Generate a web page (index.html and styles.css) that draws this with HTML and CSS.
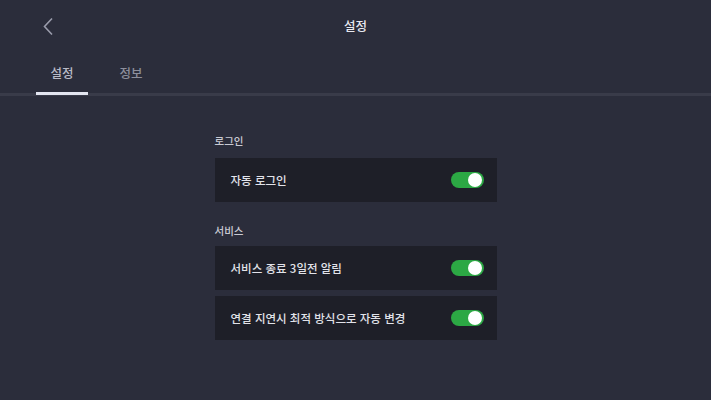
FILE: index.html
```html
<!DOCTYPE html>
<html lang="ko">
<head>
<meta charset="utf-8">
<title>설정</title>
<link rel="stylesheet" href="styles.css">
</head>
<body>
<div class="app">
  <header class="topbar">
    <button class="back" aria-label="뒤로">
      <svg width="12" height="19" viewBox="0 0 12 19"><path d="M10 1.5 L2.5 9.5 L10 17.5" fill="none" stroke="#9a9cab" stroke-width="1.6"/></svg>
    </button>
    <h1 class="title">설정</h1>
  </header>
  <nav class="tabs">
    <div class="tab active">설정</div>
    <div class="tab">정보</div>
  </nav>
  <main class="content">
    <section class="group">
      <div class="group-label">로그인</div>
      <div class="rows">
        <div class="row"><span class="row-text">자동 로그인</span><span class="toggle on"><span class="knob"></span></span></div>
      </div>
    </section>
    <section class="group">
      <div class="group-label">서비스</div>
      <div class="rows">
        <div class="row"><span class="row-text">서비스 종료 3일전 알림</span><span class="toggle on"><span class="knob"></span></span></div>
        <div class="row"><span class="row-text">연결 지연시 최적 방식으로 자동 변경</span><span class="toggle on"><span class="knob"></span></span></div>
      </div>
    </section>
  </main>
</div>
</body>
</html>
```
FILE: styles.css
```css
* { box-sizing: border-box; }
html, body { margin: 0; padding: 0; }
body {
  background: #2b2d3b;
  font-family: "Noto Sans CJK KR", "Noto Sans", sans-serif;
  color: #e4e5ec;
  width: 711px;
  height: 400px;
  overflow: hidden;
}
.topbar {
  height: 52px;
  display: flex;
  align-items: center;
  justify-content: center;
  position: relative;
}
.back {
  position: absolute;
  left: 42px;
  top: 17px;
  background: none;
  border: 0;
  padding: 0;
  width: 12px;
  height: 19px;
}
.back svg { display: block; }
.title {
  margin: 0;
  font-size: 12.5px;
  font-weight: 500;
  color: #e8e9f0;
  line-height: 16px;
}
.tabs {
  display: flex;
  gap: 17px;
  padding-left: 36px;
  height: 44px;
  border-bottom: 3px solid #393b49;
}
.tab {
  width: 52px;
  text-align: center;
  font-size: 12.5px;
  font-weight: 500;
  color: #8d8f9c;
  padding-top: 13px;
  line-height: 16px;
  position: relative;
}
.tab.active { color: #b9bbc7; }
.tab.active::after {
  content: "";
  position: absolute;
  left: 0;
  right: 0;
  bottom: -2px;
  height: 3px;
  background: #e3e5f0;
}
.content {
  width: 282px;
  margin: 0 auto;
  padding-top: 37px;
}
.group + .group { margin-top: 21px; }
.group-label {
  font-size: 10.5px;
  font-weight: 500;
  color: #c9cad3;
  line-height: 16px;
  margin-bottom: 9px;
}
.group + .group .group-label { margin-bottom: 7px; }
.rows {
  display: flex;
  flex-direction: column;
  gap: 6px;
}
.row {
  height: 44px;
  background: #1e1f28;
  display: flex;
  align-items: center;
  justify-content: space-between;
  padding: 0 13px 0 16px;
}
.row-text {
  font-size: 11.5px;
  font-weight: 500;
  color: #e2e3ea;
}
.toggle {
  width: 33px;
  height: 16px;
  border-radius: 8px;
  background: #3e4050;
  position: relative;
  display: block;
}
.toggle.on { background: #2ca844; }
.knob {
  position: absolute;
  top: 1px;
  right: 2px;
  width: 14px;
  height: 14px;
  border-radius: 50%;
  background: #ffffff;
}
```
